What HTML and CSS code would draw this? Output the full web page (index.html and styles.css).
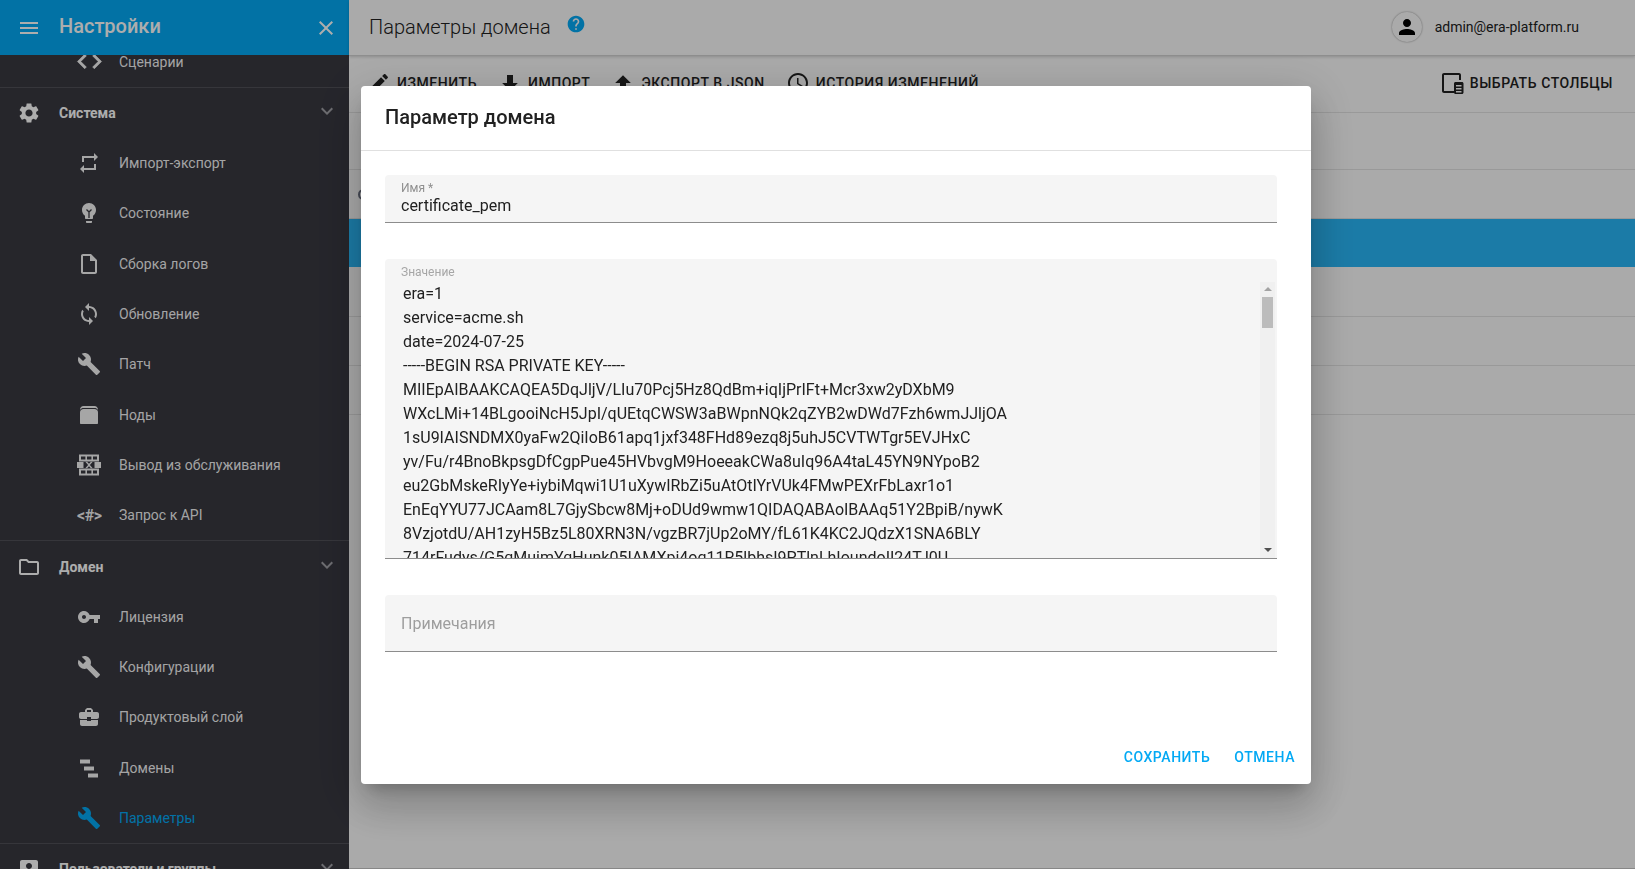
FILE: index.html
```html
<!DOCTYPE html>
<html lang="ru">
<head>
<meta charset="utf-8">
<title>Параметры домена</title>
<link rel="stylesheet" href="styles.css">
</head>
<body>
<div class="app">
  <aside class="sidebar">
    <header class="side-header">
      <svg class="ic hdr-menu" viewBox="0 0 24 24"><path d="M3 18h18v-2H3v2zm0-5h18v-2H3v2zm0-7v2h18V6H3z"/></svg>
      <span class="side-title">Настройки</span>
      <svg class="ic hdr-close" viewBox="0 0 24 24"><path d="M19 6.41L17.59 5 12 10.59 6.41 5 5 6.41 10.59 12 5 17.59 6.41 19 12 13.41 17.59 19 19 17.59 13.41 12z"/></svg>
    </header>
    <nav class="side-body">
      <section class="sec sec-scrolled">
        <a class="item"><svg class="ic item-ic item-ic-wide" viewBox="0 0 24 24"><path d="M9.4 16.6L4.8 12l4.6-4.6L8 6l-6 6 6 6 1.4-1.4zm5.2 0l4.6-4.6-4.6-4.6L16 6l6 6-6 6-1.4-1.4z"/></svg><span>Сценарии</span></a>
      </section>
      <section class="sec">
        <div class="head">
          <svg class="ic head-ic" viewBox="0 0 24 24"><path d="M19.14,12.94c0.04-0.3,0.06-0.61,0.06-0.94c0-0.32-0.02-0.64-0.07-0.94l2.03-1.58c0.18-0.14,0.23-0.41,0.12-0.61 l-1.92-3.32c-0.12-0.22-0.37-0.29-0.59-0.22l-2.39,0.96c-0.5-0.38-1.03-0.7-1.62-0.94L14.4,2.81c-0.04-0.24-0.24-0.41-0.48-0.41 h-3.84c-0.24,0-0.43,0.17-0.47,0.41L9.25,5.35C8.66,5.59,8.12,5.92,7.63,6.29L5.24,5.33c-0.22-0.08-0.47,0-0.59,0.22L2.74,8.87 C2.62,9.08,2.66,9.34,2.86,9.48l2.03,1.58C4.84,11.36,4.8,11.69,4.8,12s0.02,0.64,0.07,0.94l-2.03,1.58 c-0.18,0.14-0.23,0.41-0.12,0.61l1.92,3.32c0.12,0.22,0.37,0.29,0.59,0.22l2.39-0.96c0.5,0.38,1.03,0.7,1.62,0.94l0.36,2.54 c0.05,0.24,0.24,0.41,0.48,0.41h3.84c0.24,0,0.44-0.17,0.47-0.41l0.36-2.54c0.59-0.24,1.13-0.56,1.62-0.94l2.39,0.96 c0.22,0.08,0.47,0,0.59-0.22l1.92-3.32c0.12-0.22,0.07-0.47-0.12-0.61L19.14,12.94z M12,15.6c-1.98,0-3.6-1.62-3.6-3.6 s1.62-3.6,3.6-3.6s3.6,1.62,3.6,3.6S13.98,15.6,12,15.6z"/></svg>
          <span class="head-t">Система</span>
          <svg class="ic chev" viewBox="0 0 24 24"><path d="M16.59 8.59L12 13.17 7.41 8.59 6 10l6 6 6-6z"/></svg>
        </div>
        <a class="item"><svg class="ic item-ic" viewBox="0 0 24 24"><path d="M7 7h10v3l4-4-4-4v3H5v6h2V7zm10 10H7v-3l-4 4 4 4v-3h12v-6h-2v4z"/></svg><span>Импорт-экспорт</span></a>
        <a class="item"><svg class="ic item-ic" viewBox="0 0 24 24"><path d="M9 21c0 .55.45 1 1 1h4c.55 0 1-.45 1-1v-1H9v1zm3-19C8.14 2 5 5.14 5 9c0 2.38 1.19 4.47 3 5.74V17c0 .55.45 1 1 1h6c.55 0 1-.45 1-1v-2.26c1.81-1.27 3-3.36 3-5.74 0-3.86-3.14-7-7-7z"/><path class="bulb-in" d="M9.5 8.5l2.5 2.5 2.5-2.5M12 11v6"/></svg><span>Состояние</span></a>
        <a class="item"><svg class="ic item-ic" viewBox="0 0 24 24"><path d="M14 2H6c-1.1 0-1.99.9-1.99 2L4 20c0 1.1.89 2 1.99 2H18c1.1 0 2-.9 2-2V8l-6-6zM6 20V4h7v5h5v11H6z"/></svg><span>Сборка логов</span></a>
        <a class="item"><svg class="ic item-ic" viewBox="0 0 24 24"><path d="M12 4V1L8 5l4 4V6c3.31 0 6 2.69 6 6 0 1.01-.25 1.97-.7 2.8l1.46 1.46C19.54 15.03 20 13.57 20 12c0-4.42-3.58-8-8-8zm0 14c-3.31 0-6-2.69-6-6 0-1.01.25-1.97.7-2.8L5.24 7.74C4.46 8.97 4 10.43 4 12c0 4.42 3.58 8 8 8v3l4-4-4-4v3z"/></svg><span>Обновление</span></a>
        <a class="item"><svg class="ic item-ic" viewBox="0 0 24 24"><path d="M22.7 19l-9.1-9.1c.9-2.3.4-5-1.5-6.9-2-2-5-2.4-7.4-1.3L9 6 6 9 1.6 4.7C.4 7.1.9 10.1 2.9 12.1c1.9 1.9 4.6 2.4 6.9 1.5l9.1 9.1c.4.4 1 .4 1.4 0l2.3-2.3c.5-.4.5-1.1.1-1.4z"/></svg><span>Патч</span></a>
        <a class="item"><svg class="ic item-ic" viewBox="0 0 24 24"><path d="M6.5 3h11C19.4 3 21 4.6 21 6.5V7c-1-1.6-2-2-3.5-2h-11C5 5 4 5.400 3 7v-.5C3 4.600 4.600 3 6.500 3z"/><path d="M6.500 6h11c2 0 3.500 1.500 3.500 3.500V20c0 .6-.4 1-1 1H4c-.6 0-1-.4-1-1V9.500C3 7.500 4.500 6 6.500 6z"/></svg><span>Ноды</span></a>
        <a class="item"><svg class="ic item-ic" viewBox="0 0 24 24"><path fill-rule="evenodd" d="M2 1.500h20v7H2zM4 3.500v3h4.400v-3zM10 3.500v3h4.400v-3zM16 3.500v3h4v-3zM2 15.500h20v7H2zM4 17.500v3h4.400v-3zM10 17.500v3h4.400v-3zM16 17.500v3h4v-3z"/><path d="M0 9h6.500v6H0zM17.500 9H24v6h-6.500zM8.300 8.800h1.800l1.900 2 1.900-2h1.800l-2.800 3.200 2.800 3.200h-1.800l-1.900-2-1.900 2H8.300l2.800-3.200z"/></svg><span>Вывод из обслуживания</span></a>
        <a class="item"><span class="code-ic">&lt;#&gt;</span><span>Запрос к API</span></a>
      </section>
      <section class="sec">
        <div class="head">
          <svg class="ic head-ic" viewBox="0 0 24 24"><path d="M9.170 6l2 2H20v10H4V6h5.170M10 4H4c-1.100 0-1.990.9-1.990 2L2 18c0 1.100.9 2 2 2h16c1.100 0 2-.9 2-2V8c0-1.100-.9-2-2-2h-8l-2-2z"/></svg>
          <span class="head-t">Домен</span>
          <svg class="ic chev" viewBox="0 0 24 24"><path d="M16.59 8.59L12 13.17 7.41 8.59 6 10l6 6 6-6z"/></svg>
        </div>
        <a class="item"><svg class="ic item-ic" viewBox="0 0 24 24"><path d="M12.65 10C11.83 7.67 9.61 6 7 6c-3.31 0-6 2.690-6 6s2.690 6 6 6c2.610 0 4.830-1.670 5.650-4H17v4h4v-4h2v-4H12.650zM7 14c-1.100 0-2-.9-2-2s.9-2 2-2 2 .9 2 2-.9 2-2 2z"/></svg><span>Лицензия</span></a>
        <a class="item"><svg class="ic item-ic" viewBox="0 0 24 24"><path d="M22.7 19l-9.1-9.1c.9-2.3.4-5-1.5-6.9-2-2-5-2.4-7.4-1.3L9 6 6 9 1.6 4.7C.4 7.1.9 10.1 2.9 12.1c1.9 1.9 4.6 2.4 6.9 1.5l9.1 9.1c.4.4 1 .4 1.4 0l2.3-2.3c.5-.4.5-1.1.1-1.4z"/></svg><span>Конфигурации</span></a>
        <a class="item"><svg class="ic item-ic" viewBox="0 0 24 24"><path d="M10 16v-1H3.010L3 19c0 1.110.89 2 2 2h14c1.110 0 2-.89 2-2v-4h-7v1h-4zm10-9h-4.010V5l-2-2h-4l-2 2v2H4c-1.100 0-2 .9-2 2v3c0 1.110.89 2 2 2h6v-2h4v2h6c1.100 0 2-.9 2-2V9c0-1.100-.9-2-2-2zm-6 0h-4V5h4v2z"/></svg><span>Продуктовый слой</span></a>
        <a class="item"><svg class="ic item-ic" viewBox="0 0 24 24"><path d="M3 3.500h10v4H3zM7 10.500h10v4H7zM11 17.500h10v4H11z"/></svg><span>Домены</span></a>
        <a class="item item-active"><svg class="ic item-ic" viewBox="0 0 24 24"><path d="M22.7 19l-9.1-9.1c.9-2.3.4-5-1.5-6.9-2-2-5-2.4-7.4-1.3L9 6 6 9 1.6 4.7C.4 7.1.9 10.1 2.9 12.1c1.9 1.9 4.6 2.4 6.9 1.5l9.1 9.1c.4.4 1 .4 1.4 0l2.3-2.3c.5-.4.5-1.1.1-1.4z"/></svg><span>Параметры</span></a>
      </section>
      <section class="sec">
        <div class="head">
          <svg class="ic head-ic" viewBox="0 0 24 24"><path d="M3 5v14c0 1.100.89 2 2 2h14c1.100 0 2-.9 2-2V5c0-1.100-.9-2-2-2H5c-1.110 0-2 .9-2 2zm12 4c0 1.660-1.340 3-3 3s-3-1.340-3-3 1.340-3 3-3 3 1.340 3 3zm-9 8c0-2 4-3.100 6-3.100s6 1.100 6 3.100v1H6v-1z"/></svg>
          <span class="head-t">Пользователи и группы</span>
          <svg class="ic chev" viewBox="0 0 24 24"><path d="M16.59 8.59L12 13.17 7.41 8.59 6 10l6 6 6-6z"/></svg>
        </div>
      </section>
    </nav>
  </aside>

  <main class="main">
    <header class="topbar">
      <div class="top-left">
        <h1 class="page-title">Параметры домена</h1>
        <svg class="ic help" viewBox="0 0 24 24"><path d="M12 2C6.48 2 2 6.48 2 12s4.48 10 10 10 10-4.48 10-10S17.52 2 12 2zm1 17h-2v-2h2v2zm2.07-7.75l-.9.92C13.45 12.9 13 13.5 13 15h-2v-.5c0-1.100.45-2.100 1.170-2.830l1.240-1.260c.37-.36.59-.86.59-1.410 0-1.100-.9-2-2-2s-2 .9-2 2H8c0-2.210 1.790-4 4-4s4 1.790 4 4c0 .88-.36 1.680-.93 2.250z"/></svg>
      </div>
      <div class="user">
        <span class="avatar"><svg class="ic" viewBox="0 0 24 24"><path d="M12 12c2.210 0 4-1.790 4-4s-1.790-4-4-4-4 1.790-4 4 1.790 4 4 4zm0 2c-2.670 0-8 1.340-8 4v2h16v-2c0-2.660-5.330-4-8-4z"/></svg></span>
        <span class="user-mail">admin@era-platform.ru</span>
      </div>
    </header>
    <div class="toolbar">
      <div class="tool-group">
        <button class="tool"><svg class="ic" viewBox="0 0 24 24"><path d="M3 17.250V21h3.750L17.810 9.940l-3.750-3.750L3 17.250zM20.710 7.040c.39-.39.39-1.020 0-1.410l-2.340-2.340c-.39-.39-1.020-.39-1.410 0l-1.830 1.830 3.750 3.750 1.830-1.830z"/></svg>Изменить</button>
        <button class="tool"><svg class="ic" viewBox="0 0 24 24"><path d="M9,4H15V12H19.840L12,19.840L4.160,12H9V4Z"/></svg>Импорт</button>
        <button class="tool"><svg class="ic" viewBox="0 0 24 24"><path d="M15,20H9V12H4.160L12,4.160L19.840,12H15V20Z"/></svg>Экспорт в JSON</button>
        <button class="tool"><svg class="ic" viewBox="0 0 24 24"><path d="M11.990 2C6.470 2 2 6.480 2 12s4.470 10 9.990 10C17.520 22 22 17.520 22 12S17.520 2 11.990 2zM12 20c-4.420 0-8-3.580-8-8s3.580-8 8-8 8 3.580 8 8-3.580 8-8 8zm.5-13H11v6l5.250 3.150.75-1.230-4.500-2.670z"/></svg>История изменений</button>
      </div>
      <button class="tool tool-columns"><svg class="ic" viewBox="0 0 24 24"><path d="M4 2h15c1.100 0 2 .9 2 2v5h-2V4H4v16h10v2H4c-1.100 0-2-.9-2-2V4c0-1.100.9-2 2-2z"/><path fill-rule="evenodd" d="M15.500 11H22c.8 0 1.500.7 1.500 1.500v9c0 .8-.7 1.500-1.500 1.500h-6.500c-.8 0-1.500-.7-1.500-1.500v-9c0-.8.7-1.500 1.500-1.500zM16 14v1.500h5.500V14zM16 17v1.500h5.500V17zM16 20v1.500h5.500V20z"/></svg>Выбрать столбцы</button>
    </div>
    <div class="table">
      <div class="row row-head"></div>
      <div class="row row-cols"><span class="col-mark"></span></div>
      <div class="row row-selected"></div>
      <div class="row"></div>
      <div class="row"></div>
      <div class="row"></div>
    </div>
  </main>
</div>

<div class="backdrop">
  <div class="dialog">
    <h2 class="dlg-title">Параметр домена</h2>
    <div class="dlg-body">
      <div class="field field-name">
        <label class="lbl">Имя *</label>
        <div class="val">certificate_pem</div>
      </div>
      <div class="field field-value">
        <label class="lbl lbl-light">Значение</label>
        <div class="scroller"><pre class="mono">era=1
service=acme.sh
date=2024-07-25
-----BEGIN RSA PRIVATE KEY-----
MIIEpAIBAAKCAQEA5DqJljV/LIu70Pcj5Hz8QdBm+iqIjPrIFt+Mcr3xw2yDXbM9
WXcLMi+14BLgooiNcH5JpI/qUEtqCWSW3aBWpnNQk2qZYB2wDWd7Fzh6wmJJljOA
1sU9IAISNDMX0yaFw2QiIoB61apq1jxf348FHd89ezq8j5uhJ5CVTWTgr5EVJHxC
yv/Fu/r4BnoBkpsgDfCgpPue45HVbvgM9HoeeakCWa8uIq96A4taL45YN9NYpoB2
eu2GbMskeRIyYe+iybiMqwi1U1uXywIRbZi5uAtOtIYrVUk4FMwPEXrFbLaxr1o1
EnEqYYU77JCAam8L7GjySbcw8Mj+oDUd9wmw1QIDAQABAoIBAAq51Y2BpiB/nywK
8VzjotdU/AH1zyH5Bz5L80XRN3N/vgzBR7jUp2oMY/fL61K4KC2JQdzX1SNA6BLY
714rFudys/G5qMuimYqHunk05IAMXpi4og11R5lbhsI9PTlnLhIoundoII24TJ0U</pre></div>
        <div class="sb">
          <span class="sb-up"></span>
          <span class="sb-track"><span class="sb-thumb"></span></span>
          <span class="sb-down"></span>
        </div>
      </div>
      <div class="field field-notes"><span class="placeholder">Примечания</span></div>
    </div>
    <div class="dlg-actions">
      <button class="act">Сохранить</button>
      <button class="act">Отмена</button>
    </div>
  </div>
</div>
</body>
</html>
```

FILE: styles.css
```css
* { box-sizing: border-box; }
html, body { margin: 0; height: 100%; overflow: hidden; }
body { font-family: Roboto, "Noto Sans", sans-serif; font-size: 14px; color: #212121; background: #fbfbfb; }
.ic { display: block; width: 24px; height: 24px; fill: currentColor; flex: none; }

.app { display: flex; height: 869px; }

/* sidebar */
.sidebar { width: 349px; flex: none; display: flex; flex-direction: column; background: #383840; color: #fff; overflow: hidden; }
.side-header { height: 55px; flex: none; display: flex; align-items: center; background: #03a9f4; padding: 0 11px 0 17px; }
.hdr-menu { margin-right: 18px; }
.side-title { flex: 1; font-size: 20px; font-weight: 500; padding-bottom: 4px; }
.side-body { flex: 1; overflow: hidden; }
.sec { border-bottom: 1px solid rgba(255,255,255,.12); }
.sec-scrolled { margin-top: -18.6px; }
.head, .item { display: flex; align-items: center; height: 50.3px; }
.head { padding: 0 10px 0 17px; }
.head-ic { margin-right: 18px; }
.head-t { flex: 1; font-weight: 700; }
.chev { color: #a0a0a6; margin-top: -4px; }
.item { padding-left: 77px; color: rgba(255,255,255,.95); }
.item-ic { margin-right: 18px; }
.item-ic-wide { width: 29px; height: 29px; margin: 0 15.5px 0 -2.5px; stroke: currentColor; stroke-width: .5; }
.item-active { color: #03a9f4; }
.bulb-in { fill: none; stroke: #383840; stroke-width: 1.300; }
.code-ic { width: 24px; margin-right: 18px; font-size: 16px; font-weight: 700; letter-spacing: -.4px; white-space: nowrap; text-align: center; }

/* main page behind dialog */
.main { flex: 1; min-width: 0; display: flex; flex-direction: column; border-bottom: 1px solid #c8c8c8; }
.topbar { height: 56px; flex: none; display: flex; align-items: center; justify-content: space-between; padding: 0 56px 2px 20px; border-bottom: 1px solid #d2d2d2; box-shadow: 0 1px 3px rgba(0,0,0,.18); }
.top-left { display: flex; align-items: center; }
.page-title { margin: 0 15px 0 0; font-size: 20px; font-weight: 300; line-height: 24px; }
.help { width: 20px; height: 20px; color: #03a9f4; margin-top: -6px; }
.user { display: flex; align-items: center; gap: 13px; }
.avatar { width: 30px; height: 30px; border-radius: 50%; display: flex; align-items: center; justify-content: center; background: #fbfbfb; box-shadow: 0 0 2px rgba(0,0,0,.45); color: #000; }
.toolbar { height: 57px; flex: none; display: flex; align-items: center; justify-content: space-between; padding: 0 22px 3px 18px; border-bottom: 1px solid #e2e2e2; }
.tool-group { display: flex; gap: 21px; }
.tool { display: flex; align-items: center; gap: 6px; padding: 0; border: 0; background: none; font: 500 14px/24px Roboto, sans-serif; letter-spacing: .55px; text-transform: uppercase; color: #212121; }
.row { height: 49px; border-bottom: 1px solid #e2e2e2; }
.row-head { height: 57px; }
.row-cols { display: flex; align-items: center; padding-left: 9px; }
.col-mark { width: 11px; height: 11px; border: 2px solid #6a7080; border-radius: 50%; }
.row-selected { background: #29b6f6; height: 48px; margin-bottom: 1px; border-bottom: 0; }

/* modal */
.backdrop { position: fixed; inset: 0; display: flex; align-items: center; justify-content: center; background: rgba(0,0,0,.32); }
.dialog { width: 950px; height: 698px; margin-left: 37px; background: #fff; border-radius: 4px; display: flex; flex-direction: column; box-shadow: 0 11px 15px -7px rgba(0,0,0,.2), 0 24px 38px 3px rgba(0,0,0,.14), 0 9px 46px 8px rgba(0,0,0,.12); }
.dlg-title { margin: 0; height: 65px; flex: none; padding: 0 24px 2px; display: flex; align-items: center; border-bottom: 1px solid #e0e0e0; font-size: 20px; font-weight: 500; color: #212121; }
.dlg-body { flex: 1; padding: 24px 34px 0 24px; display: flex; flex-direction: column; gap: 36px; }
.field { background: #f5f5f5; border-radius: 4px 4px 0 0; border-bottom: 1px solid #8c8c8c; }
.field-name { height: 48px; padding: 6px 16px 0; }
.lbl { display: block; font-size: 12px; line-height: 14px; color: #8f8f8f; }
.lbl-light { color: #a6a6a6; }
.val { margin-top: 1px; font-size: 16px; line-height: 20px; color: #212121; }
.field-value { position: relative; height: 300px; padding: 6px 2px 0 16px; overflow: hidden; }
.scroller { height: 276px; margin-top: 3px; overflow: hidden; }
.mono { margin: 0; padding-left: 2px; font: 400 16px/24px Roboto, sans-serif; color: #212121; white-space: pre; }

/* the field's own scrollbar, drawn over its right edge */
.sb { position: absolute; top: 23px; right: 2px; bottom: 0; width: 15px; display: flex; flex-direction: column; background: #f0f0f0; }
.sb-up, .sb-down { flex: none; height: 15px; display: flex; align-items: center; justify-content: center; }
.sb-up::before { content: ""; border: 4px solid transparent; border-top: 0; border-bottom: 4px solid #a3a3a3; }
.sb-down::before { content: ""; border: 4px solid transparent; border-bottom: 0; border-top: 4px solid #505050; }
.sb-track { flex: 1; padding: 0 2px; }
.sb-thumb { display: block; height: 31px; background: #bcbcbc; }

.field-notes { height: 57px; padding: 2px 16px 0; display: flex; align-items: center; }
.placeholder { font-size: 16px; color: #9e9e9e; }
.dlg-actions { flex: none; display: flex; justify-content: flex-end; gap: 8px; padding: 0 8px 9px; }
.act { height: 36px; padding: 0 8px; border: 0; background: none; font: 500 14px/36px Roboto, sans-serif; letter-spacing: .55px; text-transform: uppercase; color: #03a9f4; }
```
